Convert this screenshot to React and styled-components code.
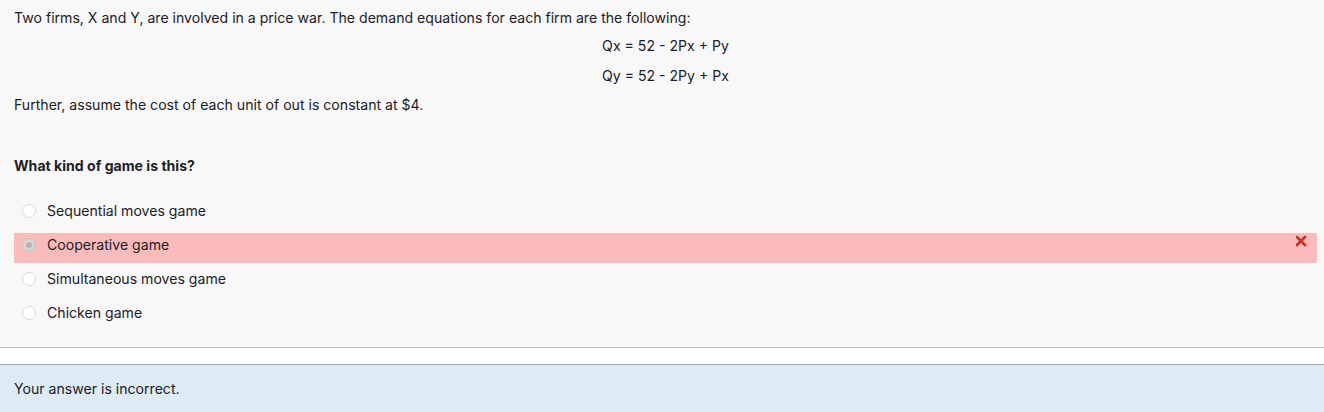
import React from "react"
import styled, { createGlobalStyle } from "styled-components"

const GlobalStyle = createGlobalStyle`
  html, body {
    margin: 0;
    padding: 0;
    background: #ffffff;
  }
  body {
    font-family: Inter, "Noto Sans", "Liberation Sans", sans-serif;
    font-size: 14.1px;
    color: #1d2125;
  }
`

const QuestionBox = styled.div`
  background: #f8f8f8;
  padding: 9px 7px 16px 14px;
  border-bottom: 1px solid #b8b8b8;
`

const Para = styled.p`
  margin: 0;
  line-height: 18px;
`

const Equations = styled.div`
  display: flex;
  flex-direction: column;
  align-items: center;
  gap: 12px;
  margin-top: 10px;
  margin-bottom: 11px;
`

const Equation = styled.div`
  line-height: 18px;
`

const Prompt = styled.div`
  margin-top: 43px;
  font-weight: 700;
  line-height: 18px;
`

const Options = styled.div`
  margin-top: 24px;
  display: flex;
  flex-direction: column;
  gap: 4px;
`

const Option = styled.div`
  display: flex;
  align-items: center;
  box-sizing: border-box;
  height: 30px;
  padding: 3px 10px 9px 8px;
  line-height: 18px;
  background: ${(p) => (p.$wrong ? "#fbbbbb" : "transparent")};
`

const Radio = styled.span`
  box-sizing: border-box;
  width: 14px;
  height: 14px;
  border-radius: 50%;
  border: 1px solid ${(p) => (p.$checked ? "#c4c4c4" : "#d9d9d9")};
  background: ${(p) => (p.$checked ? "#d6d6d6" : "#ffffff")};
  display: flex;
  align-items: center;
  justify-content: center;
  flex-shrink: 0;
  &::after {
    content: "";
    width: 6px;
    height: 6px;
    border-radius: 50%;
    background: ${(p) => (p.$checked ? "#b4b4b4" : "transparent")};
  }
`

const Label = styled.span`
  margin-left: 11px;
  flex: 1;
`

const WrongMark = styled.svg`
  width: 12px;
  height: 12px;
  align-self: flex-start;
  margin-top: -1px;
`

const Gap = styled.div`
  height: 16px;
  background: #ffffff;
  border-bottom: 1px solid #a8a8a8;
`

const Feedback = styled.div`
  background: #dcebf5;
  padding: 15px 14px 20px;
  line-height: 18px;
`

const options = [
  { text: "Sequential moves game" },
  { text: "Cooperative game", checked: true, wrong: true },
  { text: "Simultaneous moves game" },
  { text: "Chicken game" },
]

const App = () => (
  <>
    <GlobalStyle />
    <QuestionBox>
      <Para>
        Two firms, X and Y, are involved in a price war. The demand equations for each firm are the following:
      </Para>
      <Equations>
        <Equation>Qx = 52 - 2Px + Py</Equation>
        <Equation>Qy = 52 - 2Py + Px</Equation>
      </Equations>
      <Para>Further, assume the cost of each unit of out is constant at $4.</Para>
      <Prompt>What kind of game is this?</Prompt>
      <Options>
        {options.map((o) => (
          <Option key={o.text} $wrong={o.wrong}>
            <Radio $checked={o.checked} />
            <Label>{o.text}</Label>
            {o.wrong && (
              <WrongMark viewBox="0 0 12 12">
                <path d="M2 2 L10 10 M10 2 L2 10" stroke="#ca3120" strokeWidth="2.6" strokeLinecap="round" />
              </WrongMark>
            )}
          </Option>
        ))}
      </Options>
    </QuestionBox>
    <Gap />
    <Feedback>Your answer is incorrect.</Feedback>
  </>
)

export default App
